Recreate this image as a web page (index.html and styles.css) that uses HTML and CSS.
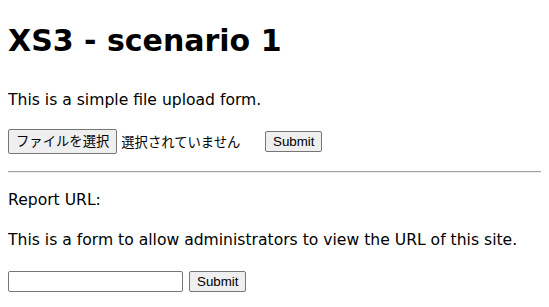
FILE: index.html
```html
<!DOCTYPE html>
<html lang="ja">
<head>
<meta charset="utf-8">
<title>XS3 - scenario 1</title>
<link rel="stylesheet" href="styles.css">
</head>
<body>
<h1 class="title">XS3 - scenario 1</h1>
<p class="text">This is a simple file upload form.</p>
<form class="upload-form">
  <span class="file-input"><button type="button" class="btn file-btn">ファイルを選択</button><span class="file-status">選択されていません</span></span>
  <button type="button" class="btn submit-btn">Submit</button>
</form>
<hr class="divider">
<p class="text label">Report URL:</p>
<p class="text">This is a form to allow administrators to view the URL of this site.</p>
<form class="report-form">
  <input type="text" class="url-input">
  <button type="button" class="btn submit-btn">Submit</button>
</form>
</body>
</html>
```

FILE: styles.css
```css
body {
  margin: 8px;
  font-family: "DejaVu Sans", "Noto Sans CJK JP", sans-serif;
  font-size: 15.6px;
  line-height: 24px;
  color: #000;
  background: #fff;
}
.title {
  font-size: 30px;
  line-height: 38px;
  font-weight: bold;
  margin: 14px 0 28px;
}
.text {
  margin: 16px 0;
}
.upload-form {
  display: flex;
  align-items: center;
  height: 27px;
  margin: 0;
}
.file-input {
  display: inline-flex;
  align-items: center;
  width: 257px;
}
.btn {
  font-family: "Liberation Sans", "Noto Sans CJK JP", sans-serif;
  font-size: 13.33px;
  line-height: 15px;
  color: #000;
  background: #efefef;
  border: 1px solid #767676;
  border-radius: 2px;
  padding: 2px 7px;
  margin: 0;
  box-sizing: border-box;
  height: 21px;
}
.file-btn {
  height: 25px;
  padding: 0 7px;
  margin-right: 4px;
}
.file-status {
  font-family: "Noto Sans CJK JP", sans-serif;
  font-size: 13.33px;
}
.divider {
  margin: 16px -7px 15px 0;
  border: 0;
  border-top: 1px solid #a0a0a0;
  border-bottom: 1px solid #eeeeee;
}
.label {
  margin-top: 0;
}
.report-form {
  display: flex;
  align-items: center;
  gap: 6px;
  height: 26px;
}
.url-input {
  width: 175px;
  height: 21px;
  box-sizing: border-box;
  border: 1px solid #767676;
  border-radius: 2px;
  padding: 1px 2px;
  margin: 0;
}
```
